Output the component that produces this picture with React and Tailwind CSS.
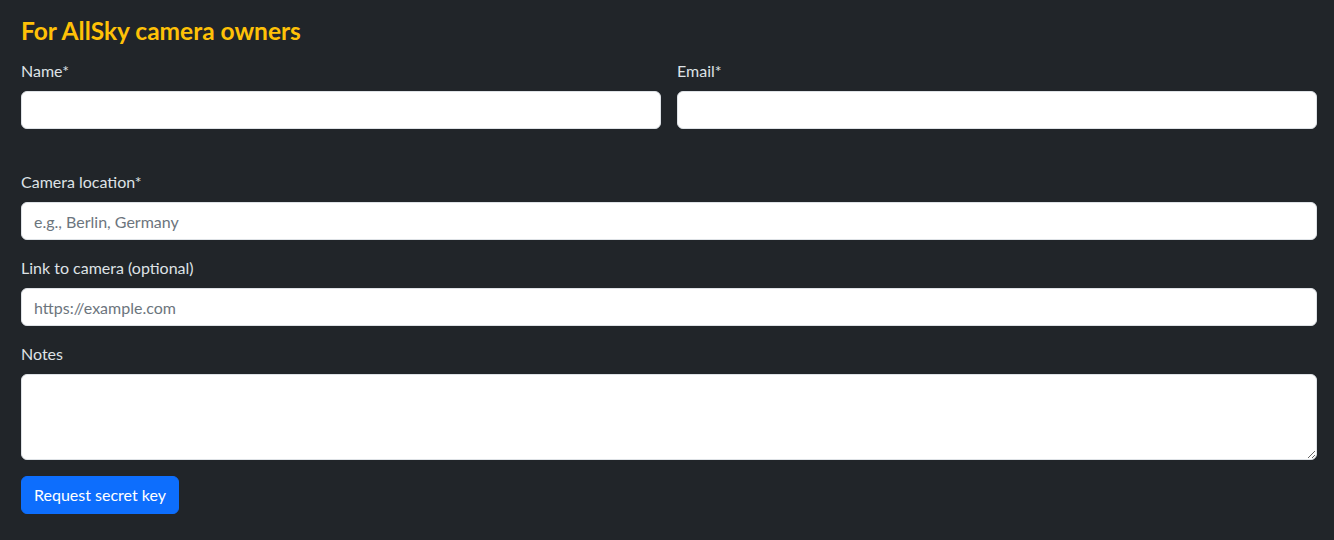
export default function App() {
  const font = { fontFamily: 'Lato, "Noto Sans", sans-serif' };
  const inputCls =
    "block w-full h-[38px] rounded-[6px] border border-[#dee2e6] bg-white px-3 text-[16px] text-[#212529] placeholder:text-[#6c757d] outline-none";
  return (
    <div className="min-h-[540px] w-full bg-[#212529] pl-[21px] pr-[17px] pt-[16px] text-[#dee2e6]" style={font}>
      <h4 className="m-0 text-[24.5px] font-bold leading-[1.2] text-[#ffc107]">For AllSky camera owners</h4>
      <div className="mt-[14px] grid grid-cols-2 gap-x-4">
        <div>
          <label className="mb-2 block text-[16px] leading-6">Name*</label>
          <input className={inputCls} />
        </div>
        <div>
          <label className="mb-2 block text-[16px] leading-6">Email*</label>
          <input className={inputCls} />
        </div>
      </div>
      <div className="mt-[41px]">
        <label className="mb-2 block text-[16px] leading-6">Camera location*</label>
        <input className={inputCls} placeholder="e.g., Berlin, Germany" />
      </div>
      <div className="mt-4">
        <label className="mb-2 block text-[16px] leading-6">Link to camera (optional)</label>
        <input className={inputCls} placeholder="https://example.com" />
      </div>
      <div className="mt-4">
        <label className="mb-2 block text-[16px] leading-6">Notes</label>
        <textarea
          rows={3}
          className="block h-[86px] w-full resize-y rounded-[6px] border border-[#dee2e6] bg-white px-3 py-[6px] text-[16px] leading-6 text-[#212529] outline-none"
        />
      </div>
      <button className="mt-4 h-[38px] rounded-[6px] border border-[#0d6efd] bg-[#0d6efd] px-3 text-[16px] leading-6 text-white">
        Request secret key
      </button>
    </div>
  );
}
